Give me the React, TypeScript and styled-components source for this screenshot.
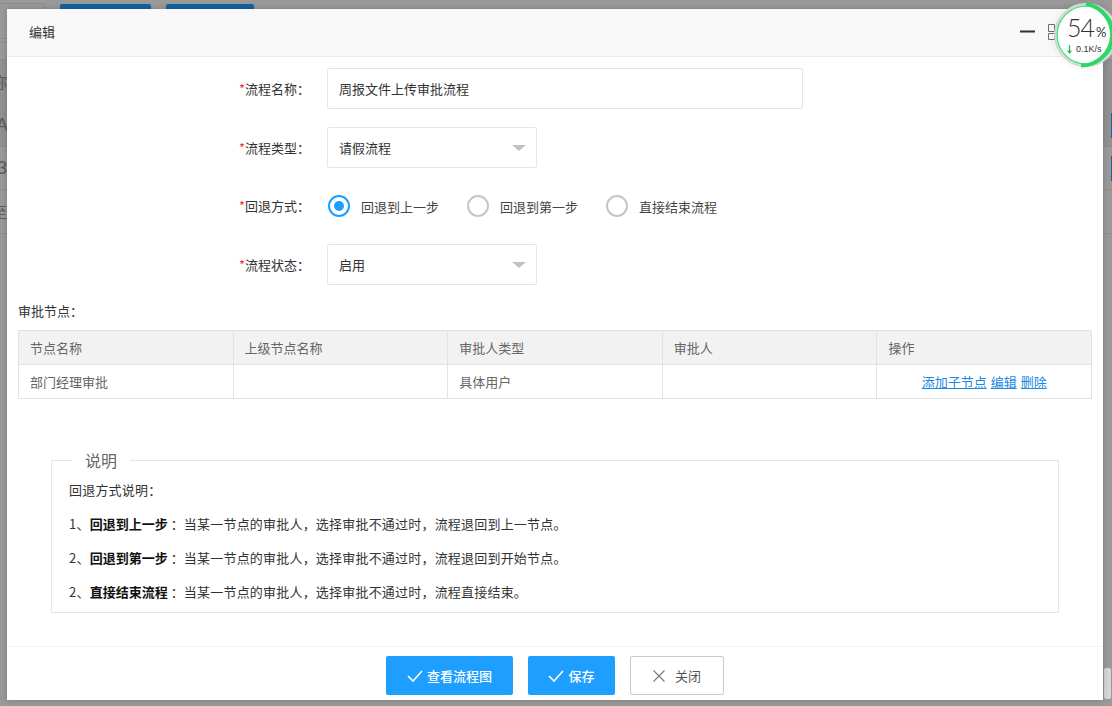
import React from 'react';
import styled, { createGlobalStyle } from 'styled-components';

const FONT = '"Noto Sans CJK SC", "Noto Sans", sans-serif';

const GlobalStyle = createGlobalStyle`
  html, body {
    margin: 0;
    padding: 0;
    width: 1112px;
    height: 706px;
    overflow: hidden;
    background: #999;
  }
  body {
    font-family: ${FONT};
    font-size: 13px;
    color: #333;
  }
`;

const Page = styled.div`
  position: relative;
  width: 1112px;
  height: 706px;
  overflow: hidden;
  background: #999;
`;

/* page dimmed behind the dialog */
const TopBar = styled.div`
  display: flex;
  gap: 15px;
  height: 43px;
  padding-top: 3px;
  box-sizing: border-box;
  border-bottom: 1px solid #8e8e8e;
`;

const GhostButton = styled.div`
  width: 46px;
  height: 36px;
  margin-left: -1px;
  box-sizing: border-box;
  border: 1px solid #8a8a8a;
  border-radius: 2px;
`;

const BlueButton = styled.div<{ $w: number }>`
  width: ${p => p.$w}px;
  height: 36px;
  margin-top: 1px;
  background: #14639e;
  border-radius: 2px;
`;

const BackRow = styled.div<{ $h: number; $dark?: boolean }>`
  display: flex;
  align-items: center;
  justify-content: space-between;
  height: ${p => p.$h}px;
  box-sizing: border-box;
  border-bottom: 1px solid #8e8e8e;
  background: ${p => (p.$dark ? '#919191' : '#999')};
  overflow: hidden;
`;

const BackText = styled.span<{ $x: number; $size?: number }>`
  margin-left: ${p => p.$x}px;
  font-family: "Liberation Sans", ${FONT};
  font-size: ${p => p.$size ?? 15}px;
  color: #5c5c5c;
`;

const BackTag = styled.span`
  width: 1px;
  height: 25px;
  background: #14639e;
`;

const Thumb = styled.div`
  position: absolute;
  right: 1px;
  bottom: 7px;
  width: 7px;
  height: 31px;
  background: #d6d6d6;
  border-radius: 2px;
`;

/* dialog */
const Dialog = styled.div`
  position: absolute;
  left: 7px;
  top: 9px;
  width: 1096px;
  height: 691px;
  display: flex;
  flex-direction: column;
  background: #fff;
  box-shadow: 0 0 6px rgba(0, 0, 0, 0.2);
`;

const Header = styled.div`
  display: flex;
  align-items: center;
  justify-content: space-between;
  flex: none;
  height: 48px;
  box-sizing: border-box;
  padding: 0 41px 2px 22px;
  background: #f8f8f8;
  border-bottom: 1px solid #eee;
  color: #333;
`;

const WindowButtons = styled.div`
  display: flex;
  align-items: center;
  gap: 13px;
`;

const Body = styled.div`
  flex: 1;
  padding: 11px 11px 0;
  min-height: 0;
`;

const FormRow = styled.div<{ $gap?: number; $h?: number }>`
  display: grid;
  grid-template-columns: 309px 1fr;
  align-items: center;
  height: ${p => p.$h ?? 41}px;
  margin-bottom: ${p => p.$gap ?? 18}px;
`;

const Label = styled.label`
  padding-right: 17px;
  text-align: right;
  color: #333;
  line-height: 20px;
`;

const Star = styled.span`
  color: #e53935;
`;

const TextInput = styled.div`
  width: 476px;
  height: 41px;
  box-sizing: border-box;
  display: flex;
  align-items: center;
  padding-left: 11px;
  border: 1px solid #e6e6e6;
  border-radius: 2px;
  color: #333;
`;

const Select = styled(TextInput)`
  position: relative;
  width: 210px;
`;

const Caret = styled.i`
  position: absolute;
  right: 10px;
  top: 17px;
  width: 0;
  height: 0;
  border-left: 7px solid transparent;
  border-right: 7px solid transparent;
  border-top: 6px solid #c2c2c2;
`;

const RadioGroup = styled.div`
  display: flex;
  align-items: center;
  margin-left: 1px;
`;

const RadioOption = styled.div`
  display: flex;
  align-items: center;
  gap: 11px;
  margin-right: 28px;
  color: #444;
`;

const RadioMark = styled.span<{ $on?: boolean }>`
  display: flex;
  align-items: center;
  justify-content: center;
  width: 22px;
  height: 22px;
  box-sizing: border-box;
  border: 2px solid ${p => (p.$on ? '#1e9fff' : '#c6c6c6')};
  border-radius: 50%;
  &::after {
    content: '';
    display: ${p => (p.$on ? 'block' : 'none')};
    width: 10px;
    height: 10px;
    border-radius: 50%;
    background: #1e9fff;
  }
`;

const SectionTitle = styled.div`
  margin: 16px 0 10px;
  line-height: 19px;
  color: #333;
`;

const Table = styled.table`
  width: 1074px;
  table-layout: fixed;
  border-collapse: collapse;
  color: #666;
`;

const Th = styled.th`
  height: 34px;
  padding: 0 11px;
  box-sizing: border-box;
  background: #f2f2f2;
  border: 1px solid #e2e2e2;
  font-weight: normal;
  text-align: left;
`;

const Td = styled.td<{ $center?: boolean }>`
  height: 34px;
  padding: 0 11px;
  box-sizing: border-box;
  border: 1px solid #e2e2e2;
  text-align: ${p => (p.$center ? 'center' : 'left')};
`;

const ActionLink = styled.a`
  margin: 0 2px;
  color: #1e88e5;
  text-decoration: underline;
`;

const Notes = styled.fieldset`
  margin: 51px 33px 0;
  padding: 3px 17px 0;
  height: 163px;
  box-sizing: border-box;
  border: 1px solid #e6e6e6;
`;

const NotesTitle = styled.legend`
  margin-left: 3px;
  padding: 0 13px;
  font-size: 16px;
  line-height: 20px;
  color: #666;
`;

const NoteLine = styled.p`
  margin: 0;
  height: 34px;
  line-height: 34px;
  letter-spacing: 0.2px;
  color: #333;
  white-space: nowrap;
  b {
    margin-right: 3px;
    letter-spacing: 0;
    color: #111;
  }
`;

const Footer = styled.div`
  display: flex;
  justify-content: center;
  align-items: flex-start;
  gap: 15px;
  flex: none;
  height: 54px;
  padding-top: 9px;
  box-sizing: border-box;
  border-top: 1px solid #f3f3f3;
`;

const Button = styled.button<{ $w: number; $plain?: boolean }>`
  display: flex;
  align-items: center;
  justify-content: center;
  gap: ${p => (p.$plain ? 10 : 4)}px;
  width: ${p => p.$w}px;
  height: 39px;
  padding: 0;
  box-sizing: border-box;
  font-family: ${FONT};
  font-size: 13px;
  font-weight: ${p => (p.$plain ? 400 : 500)};
  color: ${p => (p.$plain ? '#555' : '#fff')};
  background: ${p => (p.$plain ? '#fff' : '#1e9fff')};
  border: ${p => (p.$plain ? '1px solid #c9c9c9' : 'none')};
  border-radius: 2px;
`;

/* floating speed widget */
const Widget = styled.div`
  position: absolute;
  left: 1053px;
  top: 2px;
  width: 66px;
  height: 66px;
  border-radius: 50%;
  box-shadow: 0 0 6px rgba(0, 0, 0, 0.08);
`;

const WidgetRing = styled.svg`
  display: block;
`;

const Percent = styled.div`
  position: absolute;
  left: 14px;
  top: 11px;
  font-family: "Lato", "Open Sans", sans-serif;
  font-weight: 300;
  font-size: 25px;
  line-height: 28px;
  letter-spacing: -1px;
  color: #333;
  span {
    margin-left: 2px;
    font-size: 13px;
    font-weight: 400;
    letter-spacing: 0;
  }
`;

const Speed = styled.div`
  position: absolute;
  left: 14px;
  top: 41px;
  display: flex;
  align-items: center;
  gap: 4px;
  font-family: "Liberation Sans", sans-serif;
  font-size: 9px;
  line-height: 12px;
  white-space: nowrap;
  color: #333;
`;

const Check = () => (
  <svg width="16" height="14" viewBox="0 0 16 14" fill="none">
    <path d="M1 7l5 5 9-10" stroke="#fff" strokeWidth="1.6" />
  </svg>
);

const Cross = () => (
  <svg width="12" height="12" viewBox="0 0 12 12" fill="none">
    <path d="M.5.5l11 11M11.5.5l-11 11" stroke="#777" strokeWidth="1.1" />
  </svg>
);

const nodeColumns = ['节点名称', '上级节点名称', '审批人类型', '审批人', '操作'];

export default function App() {
  return (
    <Page>
      <GlobalStyle />
      <TopBar>
        <GhostButton />
        <BlueButton $w={91} />
        <BlueButton $w={88} />
      </TopBar>
      <BackRow $h={17} />
      <BackRow $h={44} $dark>
        <BackText $x={-8}>称</BackText>
      </BackRow>
      <BackRow $h={43} $dark>
        <BackText $x={-4} $size={18}>A</BackText>
        <BackTag />
      </BackRow>
      <BackRow $h={43}>
        <BackText $x={-3} $size={18}>3</BackText>
        <BackTag />
      </BackRow>
      <BackRow $h={44}>
        <BackText $x={-8}>至</BackText>
      </BackRow>
      <Thumb />

      <Dialog>
        <Header>
          <span>编辑</span>
          <WindowButtons>
            <svg width="15" height="3" viewBox="0 0 15 3">
              <rect width="15" height="2" y="0.5" fill="#2e2d3c" />
            </svg>
            <svg width="14" height="16" viewBox="0 0 14 16" fill="none">
              <path d="M.5.5h6v7h-6zM.5 9.5h6v6h-6zM8.5 2.5h5v11h-5z" stroke="#6d6d7d" />
            </svg>
          </WindowButtons>
        </Header>

        <Body>
          <FormRow>
            <Label><Star>*</Star>流程名称：</Label>
            <TextInput>周报文件上传审批流程</TextInput>
          </FormRow>
          <FormRow>
            <Label><Star>*</Star>流程类型：</Label>
            <Select>请假流程<Caret /></Select>
          </FormRow>
          <FormRow $h={40}>
            <Label><Star>*</Star>回退方式：</Label>
            <RadioGroup>
              <RadioOption><RadioMark $on />回退到上一步</RadioOption>
              <RadioOption><RadioMark />回退到第一步</RadioOption>
              <RadioOption><RadioMark />直接结束流程</RadioOption>
            </RadioGroup>
          </FormRow>
          <FormRow $gap={0}>
            <Label><Star>*</Star>流程状态：</Label>
            <Select>启用<Caret /></Select>
          </FormRow>

          <SectionTitle>审批节点：</SectionTitle>
          <Table>
            <thead>
              <tr>
                {nodeColumns.map(c => <Th key={c}>{c}</Th>)}
              </tr>
            </thead>
            <tbody>
              <tr>
                <Td>部门经理审批</Td>
                <Td />
                <Td>具体用户</Td>
                <Td />
                <Td $center>
                  <ActionLink>添加子节点</ActionLink>
                  <ActionLink>编辑</ActionLink>
                  <ActionLink>删除</ActionLink>
                </Td>
              </tr>
            </tbody>
          </Table>

          <Notes>
            <NotesTitle>说明</NotesTitle>
            <NoteLine>回退方式说明：</NoteLine>
            <NoteLine>1、<b>回退到上一步</b>：当某一节点的审批人，选择审批不通过时，流程退回到上一节点。</NoteLine>
            <NoteLine>2、<b>回退到第一步</b>：当某一节点的审批人，选择审批不通过时，流程退回到开始节点。</NoteLine>
            <NoteLine>2、<b>直接结束流程</b>：当某一节点的审批人，选择审批不通过时，流程直接结束。</NoteLine>
          </Notes>
        </Body>

        <Footer>
          <Button $w={127}><Check />查看流程图</Button>
          <Button $w={87}><Check />保存</Button>
          <Button $w={94} $plain><Cross />关闭</Button>
        </Footer>
      </Dialog>

      <Widget>
        <WidgetRing width="66" height="66" viewBox="0 0 66 66" fill="none">
          <circle cx="33" cy="33" r="31" fill="#fff" stroke="#d4d4d4" strokeWidth="2" />
          <circle cx="33" cy="33" r="29" stroke="#4fe084" strokeWidth="1.5" />
          <path d="M33 2a31 31 0 0 1 -5 61.6" stroke="#2fd667" strokeWidth="4" />
        </WidgetRing>
        <Percent>54<span>%</span></Percent>
        <Speed>
          <svg width="5" height="9" viewBox="0 0 5 9" fill="none">
            <path d="M2.5 0v8M.5 5.5L2.5 8l2-2.5" stroke="#1eb954" strokeWidth="1.2" />
          </svg>
          0.1K/s
        </Speed>
      </Widget>
    </Page>
  );
}
